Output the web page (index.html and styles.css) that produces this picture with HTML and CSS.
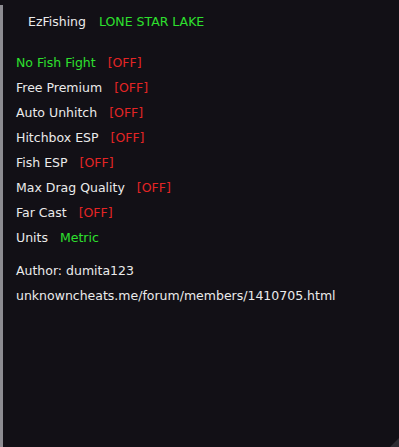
FILE: index.html
```html
<!DOCTYPE html>
<html>
<head>
<meta charset="utf-8">
<link rel="stylesheet" href="styles.css">
</head>
<body>
<div class="window">
  <div class="edge"></div>
  <div class="content">
    <div class="header"><span class="title">EzFishing</span><span class="green">LONE STAR LAKE</span></div>
    <div class="list">
      <div class="row"><span class="green">No Fish Fight</span><span class="red">[OFF]</span></div>
      <div class="row"><span>Free Premium</span><span class="red">[OFF]</span></div>
      <div class="row"><span>Auto Unhitch</span><span class="red">[OFF]</span></div>
      <div class="row"><span>Hitchbox ESP</span><span class="red">[OFF]</span></div>
      <div class="row"><span>Fish ESP</span><span class="red">[OFF]</span></div>
      <div class="row"><span>Max Drag Quality</span><span class="red">[OFF]</span></div>
      <div class="row"><span>Far Cast</span><span class="red">[OFF]</span></div>
      <div class="row"><span>Units</span><span class="green">Metric</span></div>
    </div>
    <div class="info">
      <div class="line">Author: dumita123</div>
      <div class="line">unknowncheats.me/forum/members/1410705.html</div>
    </div>
  </div>
  <div class="grip"></div>
</div>
</body>
</html>
```
FILE: styles.css
```css
html, body {
  margin: 0;
  padding: 0;
  background: #121016;
}
body {
  width: 399px;
  height: 447px;
  overflow: hidden;
  font-family: "DejaVu Sans", sans-serif;
  font-size: 12.5px;
  color: #ebebeb;
}
.window {
  position: relative;
  display: flex;
  height: 447px;
}
.edge {
  width: 3px;
  margin-top: 5px;
  background: #8d8c92;
  flex: none;
}
.content {
  padding: 14px 0 0 13px;
  display: flex;
  flex-direction: column;
}
.header {
  display: flex;
  gap: 13px;
  padding-left: 12px;
  height: 16px;
  line-height: 16px;
}
.list {
  margin-top: 25px;
  display: flex;
  flex-direction: column;
  gap: 9px;
}
.row {
  display: flex;
  gap: 12px;
  height: 16px;
  line-height: 16px;
}
.info {
  margin-top: 17px;
  display: flex;
  flex-direction: column;
  gap: 9px;
}
.line {
  height: 16px;
  line-height: 16px;
}
.green { color: #2ee02e; }
.red { color: #e42525; }
.grip {
  position: absolute;
  right: 0;
  bottom: 0;
  width: 0;
  height: 0;
  border-left: 9px solid transparent;
  border-bottom: 9px solid #2e2d33;
}
```
